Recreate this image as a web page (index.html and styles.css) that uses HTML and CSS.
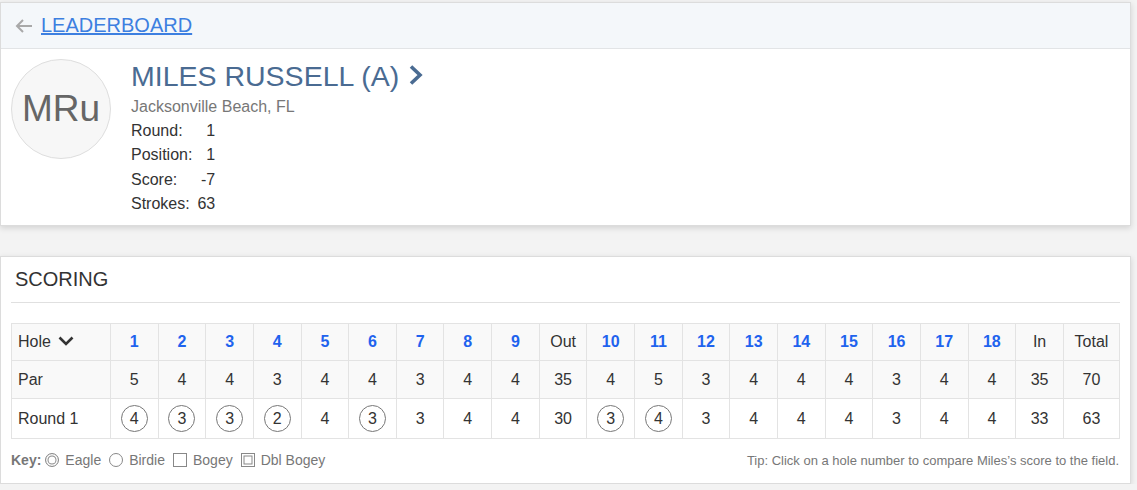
FILE: index.html
```html
<!DOCTYPE html>
<html>
<head>
<meta charset="utf-8">
<link rel="stylesheet" href="styles.css">
</head>
<body>
<div class="page">
  <section class="card player-card">
    <div class="back-bar">
      <svg class="back-arrow" width="18" height="14" viewBox="0 0 18 14"><path d="M17 7H2M8 1L2 7l6 6" fill="none" stroke="#a9a9a9" stroke-width="2"/></svg>
      <a class="back-link" href="#">LEADERBOARD</a>
    </div>
    <div class="profile">
      <div class="avatar">MRu</div>
      <div class="info">
        <div class="name">MILES RUSSELL (A) <svg class="name-chev" width="16" height="22" viewBox="0 0 16 22"><path d="M3 2.5l9 8.5-9 8.5" fill="none" stroke="#4a6b92" stroke-width="3.6"/></svg></div>
        <div class="location">Jacksonville Beach, FL</div>
        <div class="stats">
          <span class="lbl">Round:</span><span class="val">1</span>
          <span class="lbl">Position:</span><span class="val">1</span>
          <span class="lbl">Score:</span><span class="val">-7</span>
          <span class="lbl">Strokes:</span><span class="val">63</span>
        </div>
      </div>
    </div>
  </section>

  <section class="card scoring-card">
    <h2 class="scoring-title">SCORING</h2>
    <table class="scorecard">
      <colgroup>
        <col class="c-hole">
        <col span="20">
        <col class="c-total">
      </colgroup>
      <tr class="r-head">
        <td class="first">Hole <svg class="hole-chev" width="16" height="10" viewBox="0 0 16 10"><path d="M1.5 1.5l6.5 6.5 6.5-6.5" fill="none" stroke="#333" stroke-width="2.6"/></svg></td>
        <td class="hn">1</td><td class="hn">2</td><td class="hn">3</td><td class="hn">4</td><td class="hn">5</td><td class="hn">6</td><td class="hn">7</td><td class="hn">8</td><td class="hn">9</td>
        <td>Out</td>
        <td class="hn">10</td><td class="hn">11</td><td class="hn">12</td><td class="hn">13</td><td class="hn">14</td><td class="hn">15</td><td class="hn">16</td><td class="hn">17</td><td class="hn">18</td>
        <td>In</td><td>Total</td>
      </tr>
      <tr class="r-par">
        <td class="first">Par</td>
        <td>5</td><td>4</td><td>4</td><td>3</td><td>4</td><td>4</td><td>3</td><td>4</td><td>4</td>
        <td>35</td>
        <td>4</td><td>5</td><td>3</td><td>4</td><td>4</td><td>4</td><td>3</td><td>4</td><td>4</td>
        <td>35</td><td>70</td>
      </tr>
      <tr class="r-round">
        <td class="first">Round 1</td>
        <td><span class="birdie">4</span></td><td><span class="birdie">3</span></td><td><span class="birdie">3</span></td><td><span class="birdie">2</span></td><td>4</td><td><span class="birdie">3</span></td><td>3</td><td>4</td><td>4</td>
        <td>30</td>
        <td><span class="birdie">3</span></td><td><span class="birdie">4</span></td><td>3</td><td>4</td><td>4</td><td>4</td><td>3</td><td>4</td><td>4</td>
        <td>33</td><td>63</td>
      </tr>
    </table>
    <div class="legend">
      <div class="key">
        <b>Key:</b>
        <span class="k-item"><i class="k k-eagle"></i>Eagle</span>
        <span class="k-item"><i class="k k-birdie"></i>Birdie</span>
        <span class="k-item"><i class="k k-bogey"></i>Bogey</span>
        <span class="k-item"><i class="k k-dbl"></i>Dbl Bogey</span>
      </div>
      <div class="tip">Tip: Click on a hole number to compare Miles’s score to the field.</div>
    </div>
  </section>
</div>
</body>
</html>
```

FILE: styles.css
```css
html, body {
  margin: 0;
  padding: 0;
  background: #f3f3f3;
  font-family: "Liberation Sans", Arial, sans-serif;
  color: #333;
}
.page {
  padding-top: 2px;
  width: 1131px;
}
.card {
  background: #fff;
  border: 1px solid #dcdcdc;
  box-shadow: 0 2px 6px rgba(0, 0, 0, 0.14);
}
.back-bar {
  height: 45px;
  background: #f4f7fa;
  border-bottom: 1px solid #e2e4e6;
  display: flex;
  align-items: center;
  padding-left: 14px;
}
.back-arrow {
  display: block;
  margin-right: 8px;
}
.back-link {
  font-size: 20px;
  line-height: 45px;
  color: #3d7fe0;
  text-decoration: underline;
}
.profile {
  display: flex;
  padding: 10px 0 9px 10px;
}
.avatar {
  width: 98px;
  height: 98px;
  border: 1px solid #dedede;
  border-radius: 50%;
  background: #f7f7f7;
  color: #666;
  font-size: 37px;
  display: flex;
  align-items: center;
  justify-content: center;
  flex: none;
}
.info {
  margin-left: 20px;
  padding-top: 1px;
}
.name {
  font-size: 28.5px;
  line-height: 32px;
  color: #4a6b92;
  display: flex;
  align-items: center;
}
.name-chev {
  display: block;
  margin-left: 9px;
  margin-top: -2px;
}
.location {
  margin-top: 3px;
  font-size: 16px;
  line-height: 24px;
  color: #777;
}
.stats {
  display: grid;
  grid-template-columns: auto auto;
  justify-content: start;
  column-gap: 5px;
  font-size: 16px;
  line-height: 24.3px;
  color: #333;
}
.stats .val {
  text-align: right;
}
.scoring-card {
  margin-top: 30px;
  padding: 0 10px;
  height: 226px;
}
.scoring-title {
  margin: 0;
  padding: 10px 0 11px 4px;
  font-size: 20px;
  line-height: 24px;
  font-weight: normal;
  color: #333;
  border-bottom: 1px solid #e0e0e0;
}
.scorecard {
  margin-top: 20px;
  width: 1109px;
  border-collapse: collapse;
  table-layout: fixed;
  font-size: 16px;
}
.c-hole { width: 99px; }
.c-total { width: 56px; }
.scorecard td {
  border: 1px solid #e3e3e3;
  text-align: center;
  padding: 0;
  line-height: 20px;
  color: #333;
}
.scorecard td.first {
  text-align: left;
  padding-left: 6px;
}
.r-head td, .r-par td {
  background: #f9f9f9;
}
.r-head td { height: 36px; }
.r-par td { height: 37px; }
.r-round td { height: 39px; }
.scorecard td.hn {
  color: #1f63ee;
  font-weight: bold;
}
.hole-chev {
  display: inline-block;
  vertical-align: middle;
  margin-left: 3px;
  margin-top: -3px;
}
.birdie {
  display: inline-flex;
  align-items: center;
  justify-content: center;
  width: 25px;
  height: 25px;
  border: 1px solid #777;
  border-radius: 50%;
  vertical-align: middle;
}
.legend {
  display: flex;
  justify-content: space-between;
  align-items: center;
  margin-top: 13px;
  color: #777;
}
.key {
  font-size: 14px;
  display: flex;
  align-items: center;
}
.key b {
  margin-right: 4px;
}
.k-item {
  display: inline-flex;
  align-items: center;
  margin-right: 8px;
}
.k {
  display: inline-block;
  width: 12px;
  height: 12px;
  border: 1px solid #888;
  margin-right: 6px;
  box-sizing: content-box;
}
.k-eagle, .k-birdie { border-radius: 50%; }
.k-eagle, .k-dbl {
  box-shadow: inset 0 0 0 1.5px #fff, inset 0 0 0 2.5px #888;
}
.tip {
  font-size: 13px;
  padding-right: 1px;
}
```
